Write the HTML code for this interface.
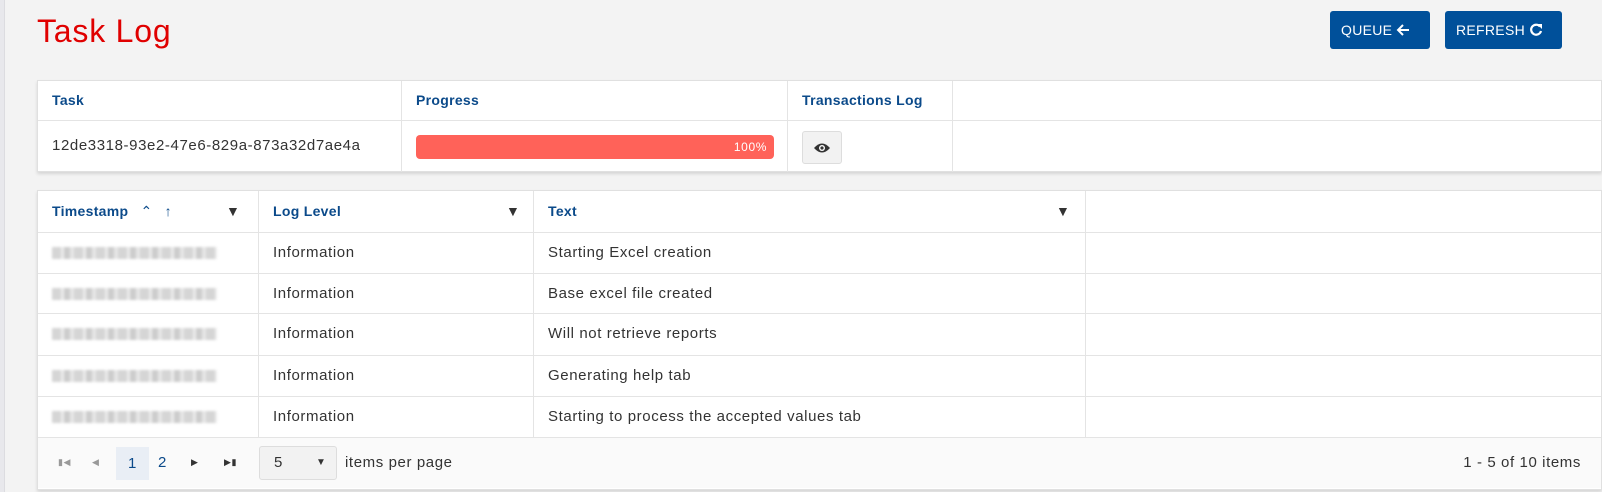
<!DOCTYPE html>
<html><head><style>
*{box-sizing:border-box;margin:0;padding:0}
body{width:1602px;height:492px;background:#f3f3f3;font-family:"Liberation Sans",sans-serif;font-size:15px;letter-spacing:.6px;color:#333;position:relative;overflow:hidden}
.lb{position:absolute;left:0;top:0;width:5px;height:492px;background:#e8e8ec;border-right:1px solid #dcdce0}
h1{position:absolute;left:37px;top:13px;font-weight:normal;font-size:32px;letter-spacing:.8px;color:#e00000}
.btn{position:absolute;top:11px;height:38px;background:#00509a;color:#fff;border-radius:3px;font-size:14px;letter-spacing:.3px;line-height:38px;padding-left:11px}
.card{position:absolute;left:37px;right:0;background:#fff;border:1px solid #e0e0e0;box-shadow:0 2px 3px rgba(0,0,0,.12)}
.c{position:absolute;border-right:1px solid #e4e4e4;height:100%;padding-left:14px}
.row{position:absolute;left:0;right:0;border-bottom:1px solid #e4e4e4}
.hd{color:#0b4a8a;font-weight:bold;font-size:14px;letter-spacing:.3px}
.blur{display:inline-block;width:165px;height:12px;background:repeating-linear-gradient(90deg,#c4c4c4 0 9px,#e4e4e4 9px 12px,#b8b8b8 12px 18px,#dcdcdc 18px 22px);filter:blur(1.3px);opacity:.7;vertical-align:middle}
</style></head><body>
<div class="lb"></div>
<h1>Task Log</h1>
<div class="btn" style="left:1330px;width:100px">QUEUE <svg width="14" height="14" viewBox="0 0 14 14" style="vertical-align:-2px"><path d="M13 7H2M7 2L2 7l5 5" stroke="#fff" stroke-width="2" fill="none"/></svg></div>
<div class="btn" style="left:1445px;width:117px">REFRESH <svg width="14" height="14" viewBox="0 0 14 14" style="vertical-align:-2px"><path d="M11 3.5A5 5 0 1 0 12 8" stroke="#fff" stroke-width="2.2" fill="none"/><path d="M8 1h5v5z" fill="#fff"/></svg></div>

<div class="card" style="top:80px;height:92px">
 <div class="row" style="top:0;height:40px">
  <div class="c hd" style="left:0;width:364px;line-height:38px">Task</div>
  <div class="c hd" style="left:364px;width:386px;line-height:38px">Progress</div>
  <div class="c hd" style="left:750px;width:165px;line-height:38px">Transactions Log</div>
 </div>
 <div style="position:absolute;top:40px;left:0;right:0;height:51px">
  <div class="c" style="left:0;width:364px;line-height:49px">12de3318-93e2-47e6-829a-873a32d7ae4a</div>
  <div class="c" style="left:364px;width:386px"><div style="margin-top:14px;width:358px;height:24px;background:#ff6259;border-radius:4px;color:#fff;font-size:12px;text-align:right;padding-right:7px;line-height:24px">100%</div></div>
  <div class="c" style="left:750px;width:165px"><div style="margin-top:10px;width:40px;height:33px;background:#f2f2f2;border:1px solid #ddd;border-radius:3px;text-align:center;padding-top:9px"><svg width="18" height="12" viewBox="0 0 18 12"><path d="M1 6Q9-3 17 6Q9 15 1 6z" fill="#333"/><circle cx="9" cy="6" r="3" fill="#fff"/><circle cx="9" cy="6" r="1.6" fill="#333"/></svg></div></div>
 </div>
</div>

<div class="card" style="top:190px;height:300px">
 <div class="row" style="top:0;height:42px">
  <div class="c hd" style="left:0;width:221px;line-height:40px">Timestamp <span style="font-weight:normal;margin-left:8px">⌃</span><span style="margin-left:12px">↑</span><span style="position:absolute;left:188px;top:0;color:#333">▼</span></div>
  <div class="c hd" style="left:221px;width:275px;line-height:40px">Log Level<span style="position:absolute;left:247px;color:#333">▼</span></div>
  <div class="c hd" style="left:496px;width:552px;line-height:40px">Text<span style="position:absolute;left:522px;color:#333">▼</span></div>
 </div>
 <div class="row" style="top:42px;height:41px"><div class="c" style="left:0;width:221px;line-height:40px"><span class="blur"></span></div><div class="c" style="left:221px;width:275px;line-height:40px">Information</div><div class="c" style="left:496px;width:552px;line-height:40px">Starting Excel creation</div></div>
 <div class="row" style="top:83px;height:40px"><div class="c" style="left:0;width:221px;line-height:39px"><span class="blur"></span></div><div class="c" style="left:221px;width:275px;line-height:39px">Information</div><div class="c" style="left:496px;width:552px;line-height:39px">Base excel file created</div></div>
 <div class="row" style="top:123px;height:42px"><div class="c" style="left:0;width:221px;line-height:40px"><span class="blur"></span></div><div class="c" style="left:221px;width:275px;line-height:40px">Information</div><div class="c" style="left:496px;width:552px;line-height:40px">Will not retrieve reports</div></div>
 <div class="row" style="top:165px;height:41px"><div class="c" style="left:0;width:221px;line-height:40px"><span class="blur"></span></div><div class="c" style="left:221px;width:275px;line-height:40px">Information</div><div class="c" style="left:496px;width:552px;line-height:40px">Generating help tab</div></div>
 <div class="row" style="top:206px;height:41px"><div class="c" style="left:0;width:221px;line-height:40px"><span class="blur"></span></div><div class="c" style="left:221px;width:275px;line-height:40px">Information</div><div class="c" style="left:496px;width:552px;line-height:40px">Starting to process the accepted values tab</div></div>
 <div style="position:absolute;top:247px;left:0;right:0;height:50px;background:#fafafa">
  <span style="position:absolute;left:20px;top:19px;font-size:9px;color:#999">▮◀</span>
  <span style="position:absolute;left:54px;top:19px;font-size:9px;color:#999">◀</span>
  <div style="position:absolute;left:78px;top:9px;width:33px;height:33px;background:#e9eef5;color:#0b4a8a;text-align:center;line-height:33px">1</div>
  <span style="position:absolute;left:120px;top:16px;color:#0b4a8a">2</span>
  <span style="position:absolute;left:153px;top:19px;font-size:9px;color:#333">▶</span>
  <span style="position:absolute;left:186px;top:19px;font-size:9px;color:#333">▶▮</span>
  <div style="position:absolute;left:221px;top:8px;width:78px;height:34px;background:#f2f2f2;border:1px solid #ddd;border-radius:3px;line-height:32px;padding-left:14px">5<span style="position:absolute;left:56px;font-size:10px">▼</span></div>
  <span style="position:absolute;left:307px;top:16px">items per page</span>
  <span style="position:absolute;right:20px;top:16px">1 - 5 of 10 items</span>
 </div>
</div>
</body></html>
